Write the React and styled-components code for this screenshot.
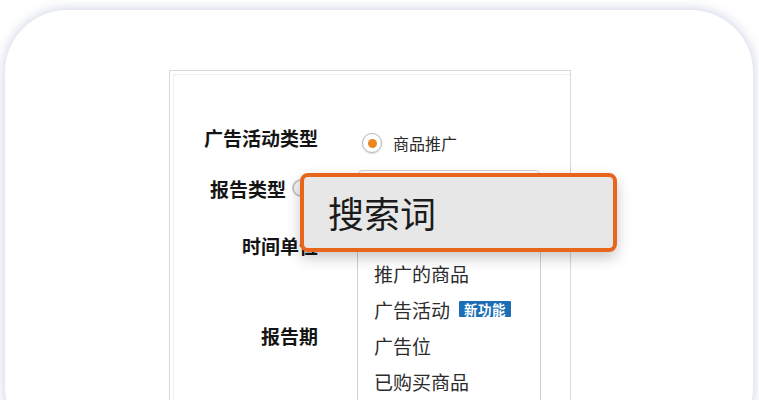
import React from "react";
import styled, { createGlobalStyle } from "styled-components";

const GlobalStyle = createGlobalStyle`
  html, body {
    margin: 0;
    padding: 0;
    background: #ffffff;
    overflow: hidden;
  }
  body {
    font-family: "Noto Sans CJK SC", "Noto Sans", sans-serif;
  }
`;

const Page = styled.div`
  width: 759px;
  height: 400px;
  padding: 10px 6px 0 5px;
  box-sizing: border-box;
  overflow: hidden;
`;

const Card = styled.div`
  height: 440px;
  background: #ffffff;
  border-radius: 62px;
  box-shadow: 0 0 12px 1px rgba(186, 194, 220, 0.7);
  padding: 60px 0 0 164px;
  box-sizing: border-box;
`;

const Panel = styled.div`
  position: relative;
  width: 402px;
  height: 400px;
  border: 1px solid #d8d8d8;
  box-sizing: border-box;
  box-shadow: inset 3px 3px 0 #ffffff, inset 4px 4px 0 #efefef;
  padding-top: 47px;
  display: flex;
  flex-direction: column;
`;

const Row = styled.div`
  display: grid;
  grid-template-columns: 148px 1fr;
  column-gap: 39px;
  align-items: center;
  height: ${(p) => p.$h}px;
`;

const Label = styled.div`
  display: flex;
  align-items: center;
  justify-content: flex-end;
  font-size: 19px;
  font-weight: 700;
  color: #141414;
  padding-right: ${(p) => p.$pr || 0}px;
  padding-bottom: ${(p) => p.$pb || 0}px;
`;

const HelpDot = styled.span`
  width: 14px;
  height: 14px;
  margin-left: 6px;
  border-radius: 50%;
  border: 2px solid #c4c4c4;
  background: #f4f4f4;
`;

const RadioRow = styled.div`
  display: flex;
  align-items: center;
  gap: 11px;
  padding: 6px 0 0 5px;
  font-size: 16px;
  color: #2a2a2a;
`;

const Radio = styled.span`
  width: 20px;
  height: 20px;
  box-sizing: border-box;
  border-radius: 50%;
  border: 1.5px solid #b5b5b5;
  box-shadow: 0 1px 2px rgba(0, 0, 0, 0.15);
  display: flex;
  align-items: center;
  justify-content: center;
  &::after {
    content: "";
    width: 9px;
    height: 9px;
    border-radius: 50%;
    background: #ec8620;
  }
`;

const Menu = styled.ul`
  position: absolute;
  left: 187px;
  top: 99px;
  width: 184px;
  height: 320px;
  margin: 0;
  padding: 84px 0 0 0;
  list-style: none;
  box-sizing: border-box;
  background: #ffffff;
  border: 1px solid #cfcfcf;
  border-radius: 6px 6px 0 0;
`;

const MenuItem = styled.li`
  height: 36px;
  display: flex;
  align-items: center;
  gap: 9px;
  padding-left: 16px;
  font-size: 19px;
  color: #2c2c2c;
`;

const Badge = styled.span`
  display: inline-flex;
  align-items: center;
  justify-content: center;
  height: 16px;
  padding: 0 5px;
  background: #1b6db5;
  color: #ffffff;
  font-size: 13.5px;
  font-weight: 700;
  letter-spacing: 0.5px;
  border-radius: 1px;
`;

const Callout = styled.div`
  position: absolute;
  left: 130px;
  top: 102px;
  width: 317px;
  height: 79px;
  box-sizing: border-box;
  border: 4px solid #e8661c;
  border-radius: 8px;
  background: #e7e7e7;
  box-shadow: 0 6px 14px rgba(0, 0, 0, 0.22);
  display: flex;
  align-items: center;
  padding: 0 0 2px 24px;
  font-size: 36px;
  color: #1b1b1b;
`;

const menuItems = ["推广的商品", "广告活动", "广告位", "已购买商品"];

export default function App() {
  return (
    <>
      <GlobalStyle />
      <Page>
        <Card>
          <Panel>
            <Row $h={44}>
              <Label $pb={6}>广告活动类型</Label>
              <RadioRow>
                <Radio />
                <span>商品推广</span>
              </RadioRow>
            </Row>
            <Row $h={52}>
              <Label $pr={8}>
                报告类型
                <HelpDot />
              </Label>
              <div />
            </Row>
            <Row $h={62}>
              <Label>时间单位</Label>
              <div />
            </Row>
            <Row $h={118}>
              <Label>报告期</Label>
              <div />
            </Row>

            <Menu>
              {menuItems.map((item) => (
                <MenuItem key={item}>
                  {item}
                  {item === "广告活动" && <Badge>新功能</Badge>}
                </MenuItem>
              ))}
            </Menu>

            <Callout>搜索词</Callout>
          </Panel>
        </Card>
      </Page>
    </>
  );
}
